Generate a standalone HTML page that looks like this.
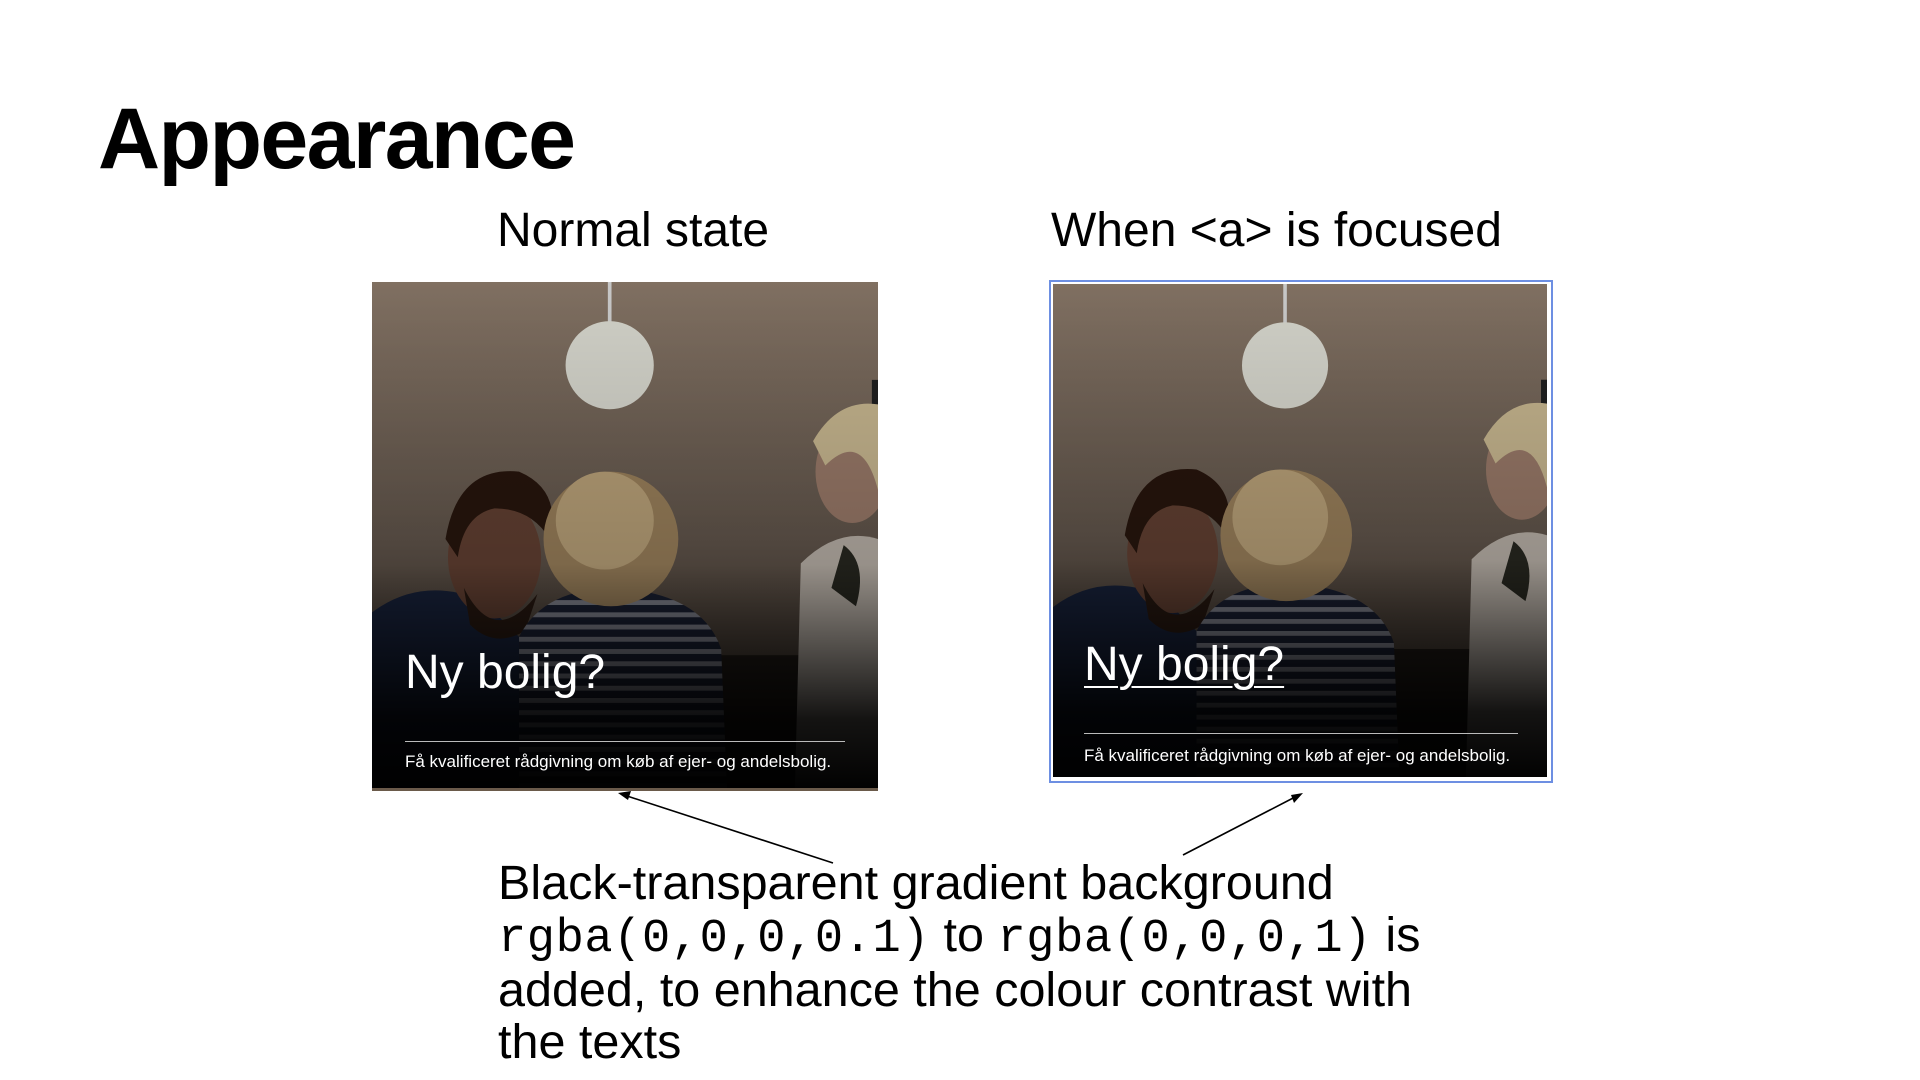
<!DOCTYPE html>
<html><head><meta charset="utf-8">
<style>
html,body{margin:0;padding:0;background:#fff;width:1920px;height:1080px;overflow:hidden;font-family:"Liberation Sans",Arial,sans-serif;color:#000}
.abs{position:absolute}
h1{position:absolute;left:98px;top:90px;margin:0;font-size:86px;font-weight:bold;letter-spacing:-1.6px}
.lbl{position:absolute;font-size:48px;top:203px}
.card{position:absolute;overflow:hidden;background:#000}
.card svg{position:absolute;left:0;top:0}
.ny{position:absolute;color:#fff;font-size:48px;font-weight:300}
.hr{position:absolute;height:1px;background:#bbb}
.cap{position:absolute;color:#fff;font-size:17px}
.body{position:absolute;left:498px;top:858px;font-size:48.5px;line-height:51.5px}
.mono{font-family:"Liberation Mono","DejaVu Sans Mono",monospace;font-size:47px;letter-spacing:0.6px;font-weight:500}
</style></head><body>
<h1>Appearance</h1>
<div class="lbl" style="left:497px">Normal state</div>
<div class="lbl" style="left:1051px">When &lt;a&gt; is focused</div>

<svg width="0" height="0" style="position:absolute">
<defs>
<linearGradient id="wall" x1="0" y1="0" x2="0" y2="1"><stop offset="0" stop-color="#8e7c6c"/><stop offset="0.5" stop-color="#6a5d52"/><stop offset="1" stop-color="#2e2620"/></linearGradient>
<linearGradient id="ov" x1="0" y1="0" x2="0" y2="1"><stop offset="0" stop-color="#000" stop-opacity="0.1"/><stop offset="0.55" stop-color="#000" stop-opacity="0.25"/><stop offset="0.85" stop-color="#000" stop-opacity="0.9"/><stop offset="1" stop-color="#000" stop-opacity="1"/></linearGradient>
<pattern id="str" width="10" height="10" patternUnits="userSpaceOnUse"><rect width="10" height="10" fill="#1c2236"/><rect width="10" height="4" fill="#8a8c98"/></pattern>
<g id="photo">
<rect width="413" height="420" fill="url(#wall)"/>
<rect x="192.5" y="0" width="3" height="40" fill="#ddd"/>
<circle cx="194" cy="68" r="36" fill="#e6e6dc"/>
<rect x="408" y="80" width="5" height="40" fill="#222"/>
<rect x="0" y="305" width="413" height="115" fill="#231d18"/>
<path d="M0 270 Q40 240 90 260 L130 300 L130 420 L0 420Z" fill="#1a2540"/>
<ellipse cx="100" cy="225" rx="38" ry="50" fill="#6a4536"/>
<path d="M60 210 Q70 150 120 155 Q155 170 145 210 Q130 185 100 185 Q75 190 70 225Z" fill="#2a170e"/>
<path d="M75 250 Q100 300 135 255 L125 285 Q100 300 80 280Z" fill="#2a1a12"/>
<path d="M120 290 Q140 250 200 250 Q270 255 285 300 L290 420 L120 420Z" fill="url(#str)"/>
<ellipse cx="195" cy="210" rx="55" ry="55" fill="#a68a62"/>
<ellipse cx="190" cy="195" rx="40" ry="40" fill="#c8ae82"/>
<path d="M350 230 Q380 200 413 210 L413 420 L345 420Z" fill="#c9c0b6"/>
<ellipse cx="392" cy="155" rx="30" ry="42" fill="#a48270"/>
<path d="M360 130 Q380 95 413 100 L413 170 Q400 120 370 150Z" fill="#d6c49a"/>
<path d="M385 215 Q405 230 395 265 L375 250Z" fill="#2a2a22"/>
<rect width="413" height="420" fill="url(#ov)"/>
</g>
</defs></svg>

<div class="card" style="left:372px;top:282px;width:506px;height:509px">
<svg width="506" height="509" viewBox="0 0 413 416" preserveAspectRatio="none"><use href="#photo"/></svg>
<div class="ny" style="left:33px;top:363px">Ny bolig?</div>
<div class="hr" style="left:33px;top:459px;width:440px"></div>
<div class="cap" style="left:33px;top:470px">Få kvalificeret rådgivning om køb af ejer- og andelsbolig.</div>
</div>
<div class="abs" style="left:372px;top:788px;width:506px;height:3px;background:#6a5a4a"></div>

<div class="abs" style="left:1049px;top:280px;width:500px;height:499px;border:2px solid #6d8fe2"></div>
<div class="card" style="left:1053px;top:284px;width:494px;height:493px">
<svg width="494" height="493" viewBox="0 0 413 412" preserveAspectRatio="none"><use href="#photo"/></svg>
<div class="ny" style="left:31px;top:353px;text-decoration:underline;text-decoration-thickness:2px;text-underline-offset:6px">Ny bolig?</div>
<div class="hr" style="left:31px;top:449px;width:434px"></div>
<div class="cap" style="left:31px;top:462px">Få kvalificeret rådgivning om køb af ejer- og andelsbolig.</div>
</div>

<svg class="abs" style="left:0;top:0" width="1920" height="1080">
<line x1="833" y1="863" x2="624" y2="795" stroke="#000" stroke-width="1.6"/>
<polygon points="618,793 631,791 628,800" fill="#000"/>
<line x1="1183" y1="855" x2="1297" y2="796" stroke="#000" stroke-width="1.6"/>
<polygon points="1303,793 1294,803 1291,795" fill="#000"/>
</svg>

<div class="body">
Black-transparent gradient background<br>
<span class="mono">rgba(0,0,0,0.1)</span> to <span class="mono">rgba(0,0,0,1)</span> is<br>
added, to enhance the colour contrast with<br>
the texts
</div>
</body></html>
